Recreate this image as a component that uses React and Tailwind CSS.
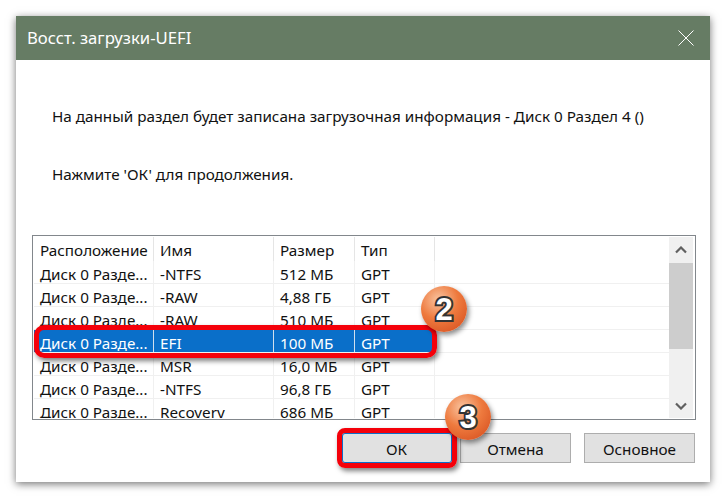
const rows = [
  ["Диск 0 Разде...", "-NTFS", "512 МБ", "GPT"],
  ["Диск 0 Разде...", "-RAW", "4,88 ГБ", "GPT"],
  ["Диск 0 Разде...", "-RAW", "510 МБ", "GPT"],
  ["Диск 0 Разде...", "EFI", "100 МБ", "GPT"],
  ["Диск 0 Разде...", "MSR", "16,0 МБ", "GPT"],
  ["Диск 0 Разде...", "-NTFS", "96,8 ГБ", "GPT"],
  ["Диск 0 Разде...", "Recovery", "686 МБ", "GPT"],
];

const cols = ["w-[120px]", "w-[120px]", "w-[81px]", "w-[80px]"];

function Badge({ n, className }) {
  return (
    <div
      className={`absolute flex h-[46px] w-[46px] items-center justify-center rounded-full bg-[radial-gradient(circle_at_38%_30%,#f9c4a0_0%,#ee7a3e_45%,#d2481a_100%)] shadow-[2px_3px_5px_rgba(0,0,0,0.45)] ${className}`}
    >
      <span className="text-[31px] font-bold leading-none text-white font-['Liberation_Sans',sans-serif] [-webkit-text-stroke:4px_#333] [paint-order:stroke_fill]">
        {n}
      </span>
    </div>
  );
}

function Chevron({ down }) {
  return (
    <svg width="12" height="8" viewBox="0 0 12 8" fill="none" stroke="#606060" strokeWidth="2.2">
      <path d={down ? "M1 1.5l5 5 5-5" : "M1 6.5l5-5 5 5"} />
    </svg>
  );
}

function App() {
  return (
    <div className="h-[498px] w-[726px] overflow-hidden bg-white p-4 font-['Noto_Sans',sans-serif] text-[15.25px] text-[#111]">
      <div className="relative flex h-[466px] w-[694px] flex-col bg-white shadow-[0_2px_8px_rgba(0,0,0,0.55)]">
        {/* Заголовок */}
        <div className="flex h-11 shrink-0 items-center justify-between bg-[#667c64] pl-[11px] pr-4 text-[16.7px] text-white">
          <span>Восст. загрузки-UEFI</span>
          <svg width="16" height="16" viewBox="0 0 16 16" stroke="#fff" strokeWidth="1">
            <path d="M0.5 0.5l15 15M15.5 0.5l-15 15" />
          </svg>
        </div>

        <p className="ml-9 mt-[46px] leading-5">
          На данный раздел будет записана загрузочная информация - Диск 0 Раздел 4 ()
        </p>
        <p className="ml-9 mt-[38px] leading-5">Нажмите 'ОК' для продолжения.</p>

        {/* Таблица */}
        <div className="relative ml-4 mt-[51px] flex h-[185px] w-[664px] overflow-hidden border border-[#82878c] py-px pl-px">
          <div className="flex-1 overflow-hidden">
            <div className="flex h-6 items-center">
              {["Расположение", "Имя", "Размер", "Тип"].map((h, i) => (
                <div key={h} className={`h-6 border-r border-[#e5e5e5] pl-[6px] leading-[26px] ${cols[i]}`}>
                  {h}
                </div>
              ))}
            </div>
            {rows.map((r, i) => (
              <div key={i} className="flex h-[23px] border-b border-[#f0f0f0] leading-[26px]">
                {r.map((c, j) => (
                  <div
                    key={j}
                    className={`h-[22px] whitespace-nowrap border-r pl-[6px] ${cols[j]} ${
                      i === 3 ? "border-[#d0dfee] bg-[#0a6fc9] text-white" : "border-[#f0f0f0]"
                    }`}
                  >
                    {c}
                  </div>
                ))}
              </div>
            ))}
          </div>

          {/* Скроллбар */}
          <div className="mr-[2px] flex w-6 shrink-0 flex-col bg-[#f0f0f0]">
            <div className="flex h-[26px] items-center justify-center">
              <Chevron />
            </div>
            <div className="h-[86px] bg-[#cdcdcd]" />
            <div className="flex flex-1 items-end justify-center pb-2">
              <Chevron down />
            </div>
          </div>

          {/* Красная рамка строки */}
          <div className="absolute left-px top-[89px] h-[33px] w-[403px] rounded-[10px] border-[5px] border-[#f4000a] shadow-[2px_3px_5px_rgba(0,0,0,0.5)]" />
        </div>

        {/* Кнопки */}
        <div className="ml-[326px] mt-[13px] flex leading-[32px]">
          <div className="relative">
            <button className="flex h-[30px] w-[109px] items-center justify-center bg-[#e1e1e1] pt-px">ОК</button>
            <div className="absolute -left-[5px] -top-[5px] h-[40px] w-[120px] rounded-[8px] border-[5px] border-[#f4000a] shadow-[2px_3px_5px_rgba(0,0,0,0.5),inset_0_0_0_1px_#0a6fc9]" />
          </div>
          <button className="ml-[9px] flex h-[30px] w-[111px] items-center justify-center border border-[#adadad] bg-[#e1e1e1] pt-px">
            Отмена
          </button>
          <button className="ml-[13px] flex h-[30px] w-[111px] items-center justify-center border border-[#adadad] bg-[#e1e1e1] pt-px">
            Основное
          </button>
        </div>

        <Badge n="2" className="left-[405px] top-[270px]" />
        <Badge n="3" className="left-[429px] top-[378px]" />
      </div>
    </div>
  );
}

export default App;
